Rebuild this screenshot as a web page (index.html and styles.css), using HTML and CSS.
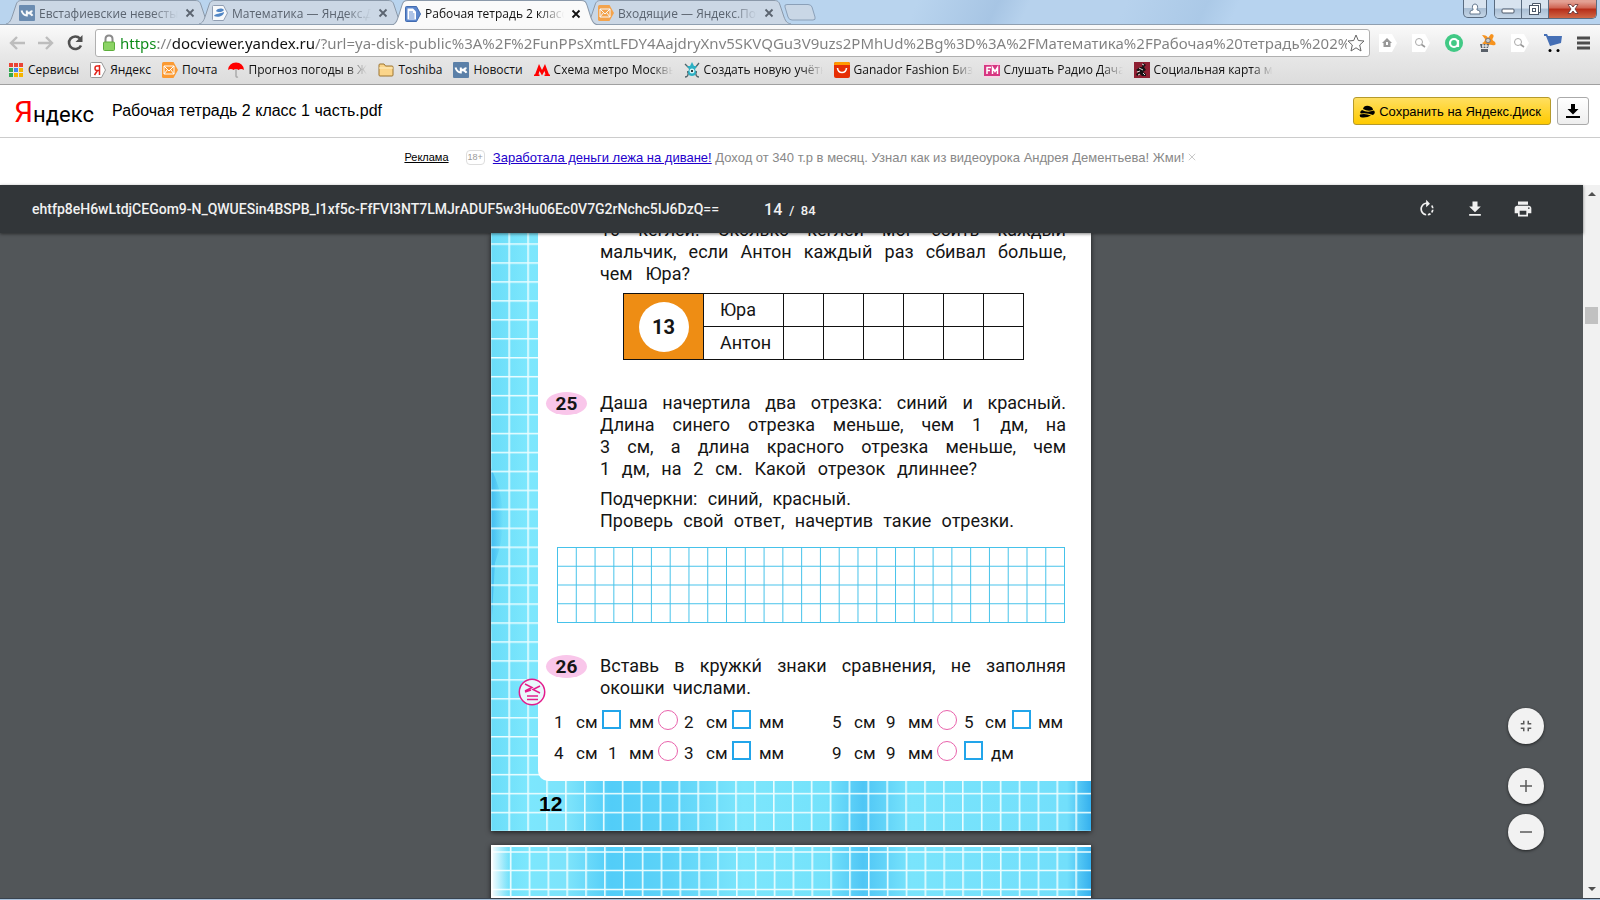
FILE: index.html
```html
<!DOCTYPE html>
<html lang="ru">
<head>
<meta charset="utf-8">
<title>Рабочая тетрадь 2 класс 1 часть.pdf</title>
<link rel="stylesheet" href="styles.css">
</head>
<body>
<svg class="defs" aria-hidden="true">
  <defs>
    <symbol id="tab" viewBox="0 0 206 24" preserveAspectRatio="none"><path d="M0 24C4 23 5 20 7 14L10 5C11 2 12 .500 16 .500H189C193 .500 194 2 195 5L199 17C201 22 202 23 206 24"/></symbol>
    <symbol id="close" viewBox="0 0 10 10"><path d="M1.500 1.500L8.500 8.500M8.500 1.500L1.500 8.500" fill="none" stroke="currentColor" stroke-width="1.800"/></symbol>
    <symbol id="vk" viewBox="0 0 16 16"><rect width="16" height="16" rx="1" fill="#5b80a8"/><path d="M2.500 5.500C3.500 8.500 5 10.500 7.800 10.500V5.500M13 5.500C12.500 7 10.500 8 8 8C10.500 8 12.500 9 13.500 10.800" fill="none" stroke="#fff" stroke-width="2"/></symbol>
    <symbol id="mail" viewBox="0 0 16 16"><path d="M1.500 0H11.500L16 8L11.500 16H1.500Q0 16 0 14.500V1.500Q0 0 1.500 0Z" fill="#fb9a32"/><path d="M2 4H12V12H2ZM2 4L7 9L12 4M2 12L5.500 7.500M12 12L8.500 7.500" fill="none" stroke="#fff"/></symbol>
    <symbol id="tag" viewBox="0 0 16 16"><path d="M1.500 .500H11.500L15.500 8L11.500 15.500H1.500Q.500 15.500 .500 14.500V1.500Q.500 .500 1.500 .500Z"/></symbol>
    <symbol id="searchtag" viewBox="0 0 18 18"><path d="M0 0H13L18 9L13 18H0Z" fill="#fff"/><circle cx="7" cy="8" r="3.500" fill="none" stroke="#aaa"/><path d="M9.500 10.500L13 13" stroke="#999" stroke-width="1.600"/></symbol>
    <symbol id="save" viewBox="0 0 24 24"><path d="M19 9h-4V3H9v6H5l7 7 7-7zM5 18v2h14v-2H5z"/></symbol>
  </defs>
</svg>

<header class="browser">
  <div class="tabstrip">
    <nav class="tabs" aria-label="Вкладки">
      <div class="tab"><svg class="tab-shape"><use href="#tab"/></svg><svg class="icon"><use href="#vk"/></svg><span class="tab-title">Евстафиевские невесты+</span><button class="tab-close" aria-label="Закрыть"><svg><use href="#close"/></svg></button></div>
      <div class="tab"><svg class="tab-shape"><use href="#tab"/></svg><svg class="icon" viewBox="0 0 16 16"><use href="#tag" fill="#fff" stroke="#8795aa"/><path d="M4 6C6 3 10 3 12 5C11 7 6 8 4 6ZM2 11C3 8 9 9 12 7C12 11 6 13 2 11Z" fill="#3c78c0"/></svg><span class="tab-title">Математика — Яндекс.Ди</span><button class="tab-close" aria-label="Закрыть"><svg><use href="#close"/></svg></button></div>
      <div class="tab active"><svg class="tab-shape"><use href="#tab"/></svg><svg class="icon" viewBox="0 0 16 16"><use href="#tag" fill="#5c87cd" stroke="#416bb0"/><path d="M2.500 2.500H8L11 5.500V13.500H2.500Z" fill="#fff"/><path d="M4 6H8M4 8H9.500M4 10H9.500M4 12H9.500" stroke="#5c87cd"/></svg><span class="tab-title">Рабочая тетрадь 2 класс</span><button class="tab-close" aria-label="Закрыть"><svg><use href="#close"/></svg></button></div>
      <div class="tab"><svg class="tab-shape"><use href="#tab"/></svg><svg class="icon"><use href="#mail"/></svg><span class="tab-title">Входящие — Яндекс.Поч</span><button class="tab-close" aria-label="Закрыть"><svg><use href="#close"/></svg></button></div>
      <button class="newtab" aria-label="Новая вкладка"><svg viewBox="0 0 32 17"><path d="M3 .500H24Q27 .500 28 3L31 13Q32 16 29 16H8Q5 16 4 13L1 3Q0 .500 3 .500Z" fill="#c9d7e6" stroke="#8ba0b8"/></svg></button>
    </nav>
    <div class="window-buttons">
      <button class="user" aria-label="Пользователь"><svg viewBox="0 0 12 12"><path d="M1 11V9Q1 7 4 7L4 6Q3 5 3.500 3Q4 1 6 1Q8 1 8.500 3Q9 5 8 6L8 7Q11 7 11 9V11Z" fill="#fff" stroke="#65788e"/></svg></button>
      <div class="window-group">
        <button class="min" aria-label="Свернуть"><svg viewBox="0 0 14 14"><rect x="1" y="7" width="12" height="4" rx="1" fill="#fff" stroke="#4b5768"/></svg></button>
        <button class="max" aria-label="Развернуть"><svg viewBox="0 0 14 14"><path d="M4.500 3V1.500H12.500V10.500H10.500" fill="#fff" stroke="#4b5768"/><rect x="1.500" y="3.500" width="9" height="9" fill="#fff" stroke="#4b5768"/><rect x="4.500" y="6.500" width="3" height="3" fill="none" stroke="#4b5768"/></svg></button>
        <button class="shut" aria-label="Закрыть окно"><svg viewBox="0 0 14 14"><path d="M2 2.500H5L7 5L9 2.500H12L9 7L12 11.500H9L7 9L5 11.500H2L5 7Z" fill="#fff" stroke="#5d3033" stroke-width=".800"/></svg></button>
      </div>
    </div>
  </div>

  <div class="toolbar">
    <div class="nav-row">
      <button class="nav" aria-label="Назад"><svg viewBox="0 0 18 18"><path d="M17 9H3M9 3L3 9L9 15" fill="none" stroke="#bdbdbd" stroke-width="2.400"/></svg></button>
      <button class="nav" aria-label="Вперёд"><svg viewBox="0 0 18 18"><path d="M1 9H15M9 3L15 9L9 15" fill="none" stroke="#bdbdbd" stroke-width="2.400"/></svg></button>
      <button class="nav" aria-label="Обновить"><svg viewBox="0 0 18 18"><path d="M14 4.500A6.300 6.300 0 1 0 15 11.500" fill="none" stroke="#505050" stroke-width="2.600"/><path d="M16.500 1V8H9.500Z" fill="#505050"/></svg></button>
      <div class="omnibox">
        <svg class="lock" viewBox="0 0 14 18"><path d="M3.500 9V5Q3.500 1.500 7 1.500Q10.500 1.500 10.500 5V9" fill="none" stroke="#8b8b8b" stroke-width="2"/><rect x="1.500" y="8" width="11" height="8.500" rx="1" fill="#8cd365" stroke="#5cae3b"/></svg>
        <input class="url" type="text" aria-label="Адрес" value="https://docviewer.yandex.ru/?url=ya-disk-public%3A%2F%2FunPPsXmtLFDY4AajdryXnv5SKVQGu3V9uzs2PMhUd%2Bg%3D%3A%2FМатематика%2FРабочая%20тетрадь%202%20класс">
        <button class="star" aria-label="В закладки"><svg viewBox="0 0 18 18"><path d="M9 1L11.300 6.500L17 7L12.700 11L14 17L9 13.800L4 17L5.300 11L1 7L6.700 6.500Z" fill="#fff" stroke="#666"/></svg></button>
      </div>
      <div class="extensions">
        <svg viewBox="0 0 18 18"><path d="M0 0H13L18 9L13 18H0Z" fill="#fff"/><path d="M3 9L8 4L13 9H11.500V13H4.500V9Z" fill="#999"/><rect x="7" y="8" width="2" height="3" fill="#fff"/></svg>
        <svg viewBox="0 0 18 18"><use href="#searchtag"/></svg>
        <svg viewBox="0 0 18 18"><circle cx="9" cy="9" r="9" fill="#41c985"/><circle cx="9" cy="9" r="4" fill="none" stroke="#fff" stroke-width="2.200"/><path d="M13 6V13" stroke="#fff" stroke-width="2.200"/></svg>
        <svg viewBox="0 0 18 18"><path d="M4 1Q9 1 10 4L13 0Q17 0 15 4Q13 6 17 8Q19 12 14 11Q11 10 8 12L4 9Q7 8 7 5Z" fill="#f7931e"/><circle cx="10" cy="6.500" r="2.300" fill="#ccc" stroke="#777"/><path d="M0 8L2 10H11L10 14H3L2 10M3 15H10V18H3Z" fill="#596069"/><path d="M4 12H10M5 10V14M8 10V14" stroke="#fff"/></svg>
        <svg viewBox="0 0 18 18"><use href="#searchtag"/></svg>
        <svg class="cart" viewBox="0 0 18 18"><path d="M0 0H3L4 2H18L17 9L6 12L2 2H0Z" fill="#456fb5"/><circle cx="6" cy="16.500" r="1.500"/><circle cx="14" cy="16.500" r="1.500"/></svg>
        <button class="menu" aria-label="Меню"><svg viewBox="0 0 13 14"><path d="M0 2H13M0 7H13M0 12H13" stroke="#4c4c4c" stroke-width="3"/></svg></button>
      </div>
    </div>
    <nav class="bookmarks" aria-label="Закладки">
      <a href="#"><svg class="icon" viewBox="0 0 16 16"><g fill="#ea4335"><path d="M1 1h4v4H1zM6 1h4v4H6zM11 1h4v4h-4z"/></g><path d="M1 6h4v4H1z" fill="#34a853"/><path d="M6 6h4v4H6z" fill="#4285f4"/><path d="M11 6h4v4h-4zM11 11h4v4h-4zM6 11h4v4H6z" fill="#f5b400"/><path d="M1 11h4v4H1z" fill="#34a853"/><path d="M5.500 0V16M10.500 0V16M0 5.500H16M0 10.500H16" stroke="#e6e6e6"/></svg><span>Сервисы</span></a>
      <a href="#"><svg class="icon" viewBox="0 0 16 16"><use href="#tag" fill="#fff" stroke="#999"/><path d="M9.500 3V13M9.500 4H7Q5 4 5 6.200T7 8.500H9.500M7.500 8.500L4.500 13" fill="none" stroke="#e2231a" stroke-width="1.500"/></svg><span>Яндекс</span></a>
      <a href="#"><svg class="icon"><use href="#mail"/></svg><span>Почта</span></a>
      <a class="long" href="#"><svg class="icon" viewBox="0 0 16 16"><path d="M0 8Q1 .500 8 .500T16 8Q13 6 10.500 8Q8 6 5.500 8Q3 6 0 8Z" fill="#f00"/><path d="M8 7V14Q8 15.500 10 15" fill="none" stroke="#aaa" stroke-width="1.500"/></svg><span>Прогноз погоды в Жу</span></a>
      <a href="#"><svg class="icon" viewBox="0 0 16 16"><path d="M1 3Q1 2 2 2H6L7.500 4H14Q15 4 15 5V13Q15 14 14 14H2Q1 14 1 13Z" fill="#fbd58a" stroke="#9c7431"/><path d="M1 6H15" stroke="#fff0c4"/></svg><span>Toshiba</span></a>
      <a href="#"><svg class="icon"><use href="#vk"/></svg><span>Новости</span></a>
      <a class="long" href="#"><svg class="icon" viewBox="0 0 16 16"><path d="M0 14V12.500H1L5 2L8 8L11 2L15 12.500H16V14H10.500V12.500H11.500L10.500 9L8 13.500L5.500 9L4.500 12.500H5.500V14Z" fill="#f00"/></svg><span>Схема метро Москвы</span></a>
      <a class="long" href="#"><svg class="icon" viewBox="0 0 16 16"><path d="M1 2L5 6M15 1L11 6M1 15Q5 15 4 9M15 15Q11 15 12 9M3 10H13" fill="none" stroke="#4e6268" stroke-width="1.300"/><path d="M8 0L10 4L13 4L11 7Q14 14 8 14T5 7L3 4H6Z" fill="#2bb0c4"/><circle cx="8" cy="9" r="2.500" fill="#d8f4f7"/><circle cx="8" cy="9" r="1"/></svg><span>Создать новую учётн</span></a>
      <a class="long" href="#"><svg class="icon" viewBox="0 0 16 16"><rect width="16" height="16" rx="2" fill="#e62e04"/><path d="M0 3V2Q0 0 2 0H14Q16 0 16 2V3Z" fill="#ff9a00"/><path d="M3.500 6Q4 10.500 8 10.500T12.500 6" fill="none" stroke="#fff" stroke-width="1.600"/></svg><span>Ganador Fashion Бизн</span></a>
      <a class="long" href="#"><svg class="icon" viewBox="0 0 16 16"><rect width="16" height="16" fill="#f4d6e5"/><rect y="3" width="16" height="11" fill="#d73581"/><path d="M3 12V5.500H7M3 8.500H6M8.500 12V5.500L11 9.500L13.500 5.500V12" fill="none" stroke="#fff" stroke-width="1.500"/></svg><span>Слушать Радио Дача</span></a>
      <a class="long" href="#"><svg class="icon" viewBox="0 0 16 16"><rect width="16" height="16" fill="#8e1f32"/><path d="M9 1L12 3L10 5L12 8L9 10L12 12V14H8L6 12L3 14L2 12L5 10L2 8L6 5L8 5Z" fill="#161214"/><path d="M8 2L10 3M5 6L9 8M3 10L6 9M9 11L11 13M4 13L6 12" stroke="#ddd"/></svg><span>Социальная карта мо</span></a>
    </nav>
  </div>
</header>

<section class="site-header">
  <a class="logo" href="#"><span>Я</span>ндекс</a>
  <h1>Рабочая тетрадь 2 класс 1 часть.pdf</h1>
  <button class="save"><svg viewBox="0 0 16 14"><path d="M4 5Q5 1 10 2Q14 3 14 6Q9 8 4 5ZM3 6Q8 9 15 6.500Q17 9 14 11Q8 8.500 2 9.500Q0 8 3 6ZM1 10.500Q6 9 12 11.500Q8 14 3 13.500Q0 13 1 10.500Z"/></svg>Сохранить на Яндекс.Диск</button>
  <button class="download" aria-label="Скачать"><svg viewBox="0 0 14 16"><path d="M5 1H9V6H12.500L7 11.500L1.500 6H5ZM0 13H14V15H0Z"/></svg></button>
</section>

<aside class="ad">
  <a class="ad-label" href="#">Реклама</a>
  <span class="age">18+</span>
  <p><a href="#">Заработала деньги лежа на диване!</a> Доход от 340 т.р в месяц. Узнал как из видеоурока Андрея Дементьева! Жми!</p>
  <button aria-label="Закрыть рекламу"><svg viewBox="0 0 10 10"><path d="M1 1L9 9M9 1L1 9" stroke="#bbb"/></svg></button>
</aside>

<main class="viewer">
  <div class="pdf">
    <div class="pdf-bar">
      <span class="pdf-title">ehtfp8eH6wLtdjCEGom9-N_QWUESin4BSPB_I1xf5c-FfFVI3NT7LMJrADUF5w3Hu06Ec0V7G2rNchc5IJ6DzQ==</span>
      <span class="pdf-page">14 <small>/&nbsp; 84</small></span>
      <div class="pdf-tools">
        <button aria-label="Повернуть"><svg viewBox="0 0 24 24"><path d="M15.550 5.550L11 1v3.070C7.060 4.560 4 7.920 4 12s3.050 7.440 7 7.930v-2.020c-2.840-.480-5-2.940-5-5.910s2.160-5.430 5-5.910V10l4.550-4.450zM19.930 11c-.170-1.390-.720-2.730-1.620-3.890l-1.420 1.420c.540.750.880 1.600 1.020 2.470h2.020zM13 17.900v2.020c1.390-.170 2.740-.710 3.900-1.610l-1.440-1.440c-.750.540-1.590.890-2.460 1.030zm3.890-2.420l1.420 1.410c.900-1.160 1.450-2.500 1.620-3.890h-2.020c-.140.870-.480 1.720-1.020 2.480z"/></svg></button>
        <button aria-label="Скачать"><svg viewBox="0 0 24 24"><use href="#save"/></svg></button>
        <button aria-label="Печать"><svg viewBox="0 0 24 24"><path d="M19 8H5c-1.660 0-3 1.340-3 3v6h4v4h12v-4h4v-6c0-1.660-1.340-3-3-3zm-3 11H8v-5h8v5zm3-7c-.550 0-1-.450-1-1s.450-1 1-1 1 .450 1 1-.450 1-1 1zm-1-9H6v4h12V3z"/></svg></button>
      </div>
    </div>

    <div class="pages">
      <article class="page">
        <svg class="paper" aria-hidden="true">
          <defs>
            <pattern id="cells" x="-1.500" y="10.300" width="18.900" height="18.950" patternUnits="userSpaceOnUse"><path d="M0 .800H18.900M.800 0V18.950" stroke="#eafdff" stroke-width="1.600"/></pattern>
            <linearGradient id="wash"><stop offset="0" stop-color="#6adcf8"/><stop offset=".060" stop-color="#7ce7fd"/><stop offset=".130" stop-color="#7ce3fb"/><stop offset=".200" stop-color="#52cdf8"/><stop offset=".300" stop-color="#5dd3f8"/><stop offset=".420" stop-color="#7ce6fc"/><stop offset=".560" stop-color="#74e2fb"/><stop offset=".620" stop-color="#4fc6f5"/><stop offset=".700" stop-color="#79e4fc"/><stop offset=".960" stop-color="#72dffb"/><stop offset="1" stop-color="#35b0ee"/></linearGradient>
            <linearGradient id="edge"><stop offset="0" stop-color="#2ba9ec" stop-opacity=".600"/><stop offset="1" stop-color="#2ba9ec" stop-opacity="0"/></linearGradient>
          </defs>
          <rect width="100%" height="100%" fill="url(#wash)"/>
          <path d="M0 235Q22 280 4 330L0 400Z" fill="url(#edge)"/>
          <rect width="100%" height="100%" fill="url(#cells)"/>
        </svg>
        <div class="sheet">
          <div class="body first">
            <span class="line">10 кеглей. Сколько кеглей мог сбить каждый</span>
            <span class="line">мальчик, если Антон каждый раз сбивал больше,</span>
            <span class="line w90">чем Юра?</span>
          </div>
          <table class="score">
            <tr><td class="sum" rowspan="2"><b>13</b></td><th scope="row">Юра</th><td></td><td></td><td></td><td></td><td></td><td></td></tr>
            <tr><th scope="row">Антон</th><td></td><td></td><td></td><td></td><td></td><td></td></tr>
          </table>
          <section class="task">
            <h2>25</h2>
            <div class="body">
              <span class="line">Даша начертила два отрезка: синий и красный.</span>
              <span class="line">Длина синего отрезка меньше, чем 1 дм, на</span>
              <span class="line">3 см, а длина красного отрезка меньше, чем</span>
              <span class="line w377">1 дм, на 2 см. Какой отрезок длиннее?</span>
              <span class="line w251 para">Подчеркни: синий, красный.</span>
              <span class="line w414">Проверь свой ответ, начертив такие отрезки.</span>
            </div>
          </section>
          <svg class="draw-grid" viewBox="0 0 508 76" preserveAspectRatio="none" aria-hidden="true">
            <defs><pattern id="thin" width="18.780" height="18.750" patternUnits="userSpaceOnUse"><path d="M0 .500H18.780M.500 0V18.750" stroke="#45c2ea"/></pattern></defs>
            <rect width="508" height="76" fill="url(#thin)"/><path d="M507.500 0V76" stroke="#45c2ea"/>
          </svg>
          <section class="task">
            <h2>26</h2>
            <div class="body">
              <span class="line">Вставь в кружки́ знаки сравнения, не заполняя</span>
              <span class="line w151">окошки числами.</span>
            </div>
          </section>
          <div class="equations">
            <span>1</span><span>см</span><i class="box"></i><span>мм</span><i class="ring"></i><span>2</span><span>см</span><i class="box"></i><span>мм</span><span>5</span><span>см</span><span>9</span><span>мм</span><i class="ring"></i><span>5</span><span>см</span><i class="box"></i><span>мм</span>
            <span>4</span><span>см</span><span class="mid">1</span><span>мм</span><i class="ring"></i><span>3</span><span>см</span><i class="box"></i><span>мм</span><span>9</span><span>см</span><span>9</span><span>мм</span><i class="ring"></i><i class="box"></i><span class="mid">дм</span>
          </div>
        </div>
        <svg class="compare" viewBox="0 0 28 28" aria-hidden="true"><circle cx="14" cy="14" r="12.700" fill="#e9f8fc" stroke="#e31c8c" stroke-width="1.500"/><path d="M7 6L14 9.500L7 13M22 8L15 11.500L22 15M9 18H20M9 21.500H20M7 14L13 12" fill="none" stroke="#e31c8c" stroke-width="1.500"/></svg>
        <div class="folio">12</div>
      </article>
      <article class="page next">
        <svg class="paper" aria-hidden="true">
          <defs>
            <pattern id="columns" width="18.850" height="80" patternUnits="userSpaceOnUse"><path d="M.800 0V80" stroke="#eafdff" stroke-width="1.600"/></pattern>
            <linearGradient id="fade"><stop offset="0" stop-color="#fff"/><stop offset="1" stop-color="#fff" stop-opacity="0"/></linearGradient>
          </defs>
          <rect y="2" width="100%" height="49" fill="url(#wash)"/>
          <path d="M0 7H600M0 25.500H600M0 44.500H600" stroke="#eafdff" stroke-width="1.600"/>
          <rect width="100%" height="60" fill="url(#columns)"/>
          <rect width="18" height="53" fill="url(#fade)"/>
        </svg>
      </article>
    </div>

    <div class="zoom">
      <button class="fit" aria-label="По размеру страницы"><svg viewBox="0 0 24 24"><path d="M5 16h3v3h2v-5H5v2zm3-8H5v2h5V5H8v3zm6 11h2v-3h3v-2h-5v5zm2-11V5h-2v5h5V8h-3z"/></svg></button>
      <button aria-label="Увеличить"><svg viewBox="0 0 24 24"><path d="M4 11H11V4H13V11H20V13H13V20H11V13H4Z"/></svg></button>
      <button aria-label="Уменьшить"><svg viewBox="0 0 24 24"><path d="M4 11H20V13H4Z"/></svg></button>
    </div>
  </div>
  <div class="scrollbar"><svg viewBox="0 0 8 4"><path d="M0 4L4 0L8 4Z"/></svg><div class="track"><div class="thumb"></div></div><svg viewBox="0 0 8 4"><path d="M0 0L4 4L8 0Z"/></svg></div>
</main>
<footer class="taskbar"></footer>
</body>
</html>
```
FILE: styles.css
```css
* { box-sizing: border-box; }
body {
  margin: 0;
  height: 100vh;
  display: flex;
  flex-direction: column;
  overflow: hidden;
  background: #fff;
  color: #000;
  font-family: "Liberation Sans", Arial, sans-serif;
}
button { padding: 0; border: 0; background: none; font: inherit; color: inherit; display: flex; align-items: center; justify-content: center; }
svg { display: block; flex: none; }
.defs { position: absolute; width: 0; height: 0; }
.icon { width: 16px; height: 16px; }

/* browser window */
.browser { flex: none; font-family: "Open Sans", "Noto Sans", sans-serif; font-size: 12px; }
.tabstrip {
  height: 25px;
  display: flex;
  justify-content: space-between;
  border-bottom: 1px solid #8f9fb0;
  background: linear-gradient(115deg, #b9d4ee 0 57%, #a7c5e4 62%, #b7d2ed 64% 70%, #abc9e7 75%, #b7d3ef 77%);
}
.tabs { display: flex; padding-left: 6px; align-items: flex-end; }
.tab { position: relative; width: 206px; height: 24px; margin-right: -13px; padding: 2px 11px 0 13px; display: flex; align-items: center; color: #5b6470; }
.tab.active { z-index: 1; height: 25px; margin-bottom: -1px; color: #111; }
.tab-shape { position: absolute; inset: 0; width: 100%; height: 100%; fill: #cbd7e5; stroke: #8b99aa; }
.active .tab-shape { fill: #fafafa; }
.tab .icon, .tab-title, .tab-close { position: relative; }
.tab:not(.active) .icon { opacity: .85; }
.tab-title { width: 142px; margin: 0 4px; overflow: hidden; white-space: nowrap; mask-image: linear-gradient(to right, #000 80%, transparent 98%); }
.tab-close { width: 10px; height: 10px; }
.tab-close svg { width: 10px; height: 10px; }
.newtab { width: 32px; height: 17px; margin: 0 0 3px 6px; }
.newtab svg { width: 32px; height: 17px; }
.window-buttons { display: flex; gap: 7px; padding-right: 3px; }
.window-buttons button { height: 18px; background: linear-gradient(#d8e3ef 45%, #a9bed4 50%, #c5d6e7); }
.window-buttons svg { width: 14px; height: 14px; }
.window-buttons .user { width: 24px; border: 1px solid #596b80; border-top: 0; border-radius: 0 0 5px 5px; }
.window-buttons .user svg { width: 12px; height: 12px; }
.window-group { display: flex; height: 19px; border: 1px solid #596b80; border-top: 0; border-radius: 0 0 5px 5px; overflow: hidden; }
.min, .max { width: 27px; border-right: 1px solid #596b80; }
.window-buttons .shut { width: 47px; background: linear-gradient(#e3a093 10%, #cf6250 45%, #b62c18 50%, #d06746); }

.toolbar { height: 60px; padding: 4px 10px 0 8px; border-bottom: 1px solid #a0a0a0; background: linear-gradient(#fafafa, #e8e8e8 50%, #dcdcdc); }
.nav-row { display: flex; align-items: center; }
.nav { width: 18px; margin-right: 11px; }
.nav svg { width: 18px; height: 18px; }
.omnibox { flex: 1; height: 28px; padding: 0 4px 0 6px; display: flex; align-items: center; border: 1px solid #b0b0b0; border-radius: 3px; background: #fff; }
.lock { width: 14px; height: 18px; }
.url {
  flex: 1;
  min-width: 0;
  height: 26px;
  margin-left: 4px;
  padding: 0;
  border: 0;
  outline: 0;
  font: 15px "Noto Sans", sans-serif;
  color: transparent;
  background: linear-gradient(to right, #0a8a16 0 38px, #808080 38px 52px, #111 52px 195px, #808080 195px);
  background-clip: text;
  -webkit-background-clip: text;
}
.star svg { width: 18px; height: 18px; }
.extensions { display: flex; align-items: center; gap: 15px; margin-left: 9px; }
.extensions > svg { width: 18px; height: 18px; }
.menu svg { width: 13px; height: 14px; }
.bookmarks { display: flex; gap: 11px; padding-top: 5px; }
.bookmarks a { display: flex; align-items: center; gap: 4px; color: #111; text-decoration: none; line-height: 16px; }
.bookmarks span { white-space: nowrap; }
.bookmarks .long span { width: 119px; overflow: hidden; mask-image: linear-gradient(to right, #000 82%, transparent); }

/* document header */
.site-header { flex: none; height: 53px; padding: 0 11px 0 14px; display: flex; align-items: center; border-bottom: 1px solid #ccc; }
.logo { width: 98px; font: 22px Roboto, sans-serif; color: #000; text-decoration: none; white-space: nowrap; }
.logo span { color: #f00; font-size: 30px; }
h1 { flex: 1; margin: 0; font-size: 16px; font-weight: 400; }
.save { height: 28px; padding: 0 9px 0 5px; gap: 4px; border: 1px solid #b59a2c; border-radius: 3px; background: linear-gradient(#ffdf60, #ffca00); font-size: 13px; }
.save svg { width: 16px; height: 14px; }
.download { width: 32px; height: 28px; margin-left: 6px; border: 1px solid #aaa; border-radius: 3px; background: linear-gradient(#fff, #eee); }
.download svg { width: 14px; height: 16px; }
.ad { flex: none; height: 47px; padding-bottom: 9px; display: flex; align-items: center; justify-content: center; font-size: 13px; color: #888; }
.ad p { margin: 0 3px 0 8px; }
.ad p a { color: #20c; }
.ad .ad-label { margin-right: 17px; color: #000; font-size: 11px; }
.age { padding: 0 1px; border: 1px solid #ddd; border-radius: 4px; font-size: 9px; line-height: 13px; color: #999; }
.ad button svg { width: 8px; height: 8px; }

/* pdf viewer */
.viewer { flex: 1; min-height: 0; display: flex; background: #525659; }
.pdf { position: relative; flex: 1; min-width: 0; display: flex; flex-direction: column; }
.pdf-bar { position: relative; z-index: 1; flex: none; height: 48px; padding: 0 50px 0 32px; display: flex; align-items: center; background: #323639; color: #f1f1f1; box-shadow: 0 1px 3px rgba(0, 0, 0, .5); font: 500 14px Roboto, sans-serif; }
.pdf-page { margin-left: 45px; font-size: 16px; }
.pdf-page small { margin-left: 3px; font-size: 13px; }
.pdf-tools { margin-left: auto; display: flex; gap: 28px; }
.pdf-tools svg { width: 20px; height: 20px; fill: #f1f1f1; }
.pages { flex: 1; min-height: 0; padding-right: 1px; overflow: hidden; display: flex; flex-direction: column; align-items: center; gap: 14px; }
.page { position: relative; flex: none; width: 600px; padding-left: 47px; background: #fff; box-shadow: 0 1px 5px rgba(0, 0, 0, .7); }
.paper { position: absolute; left: 0; top: 0; width: 100%; height: 100%; }
.sheet { position: relative; padding: 0 25px 12px 8px; border-bottom-left-radius: 10px; background: #fff; color: #151515; font: 18px/22px Roboto, sans-serif; }
.line { display: block; white-space: nowrap; text-align: justify; text-align-last: justify; }
.w90 { width: 90px; }
.w377 { width: 377px; }
.w251 { width: 251px; }
.w414 { width: 414px; }
.w151 { width: 151px; }
.para { margin-top: 8px; }
.first { margin-top: -14px; padding-left: 54px; }
.score { margin: 8px 0 32px 77px; border-collapse: collapse; table-layout: fixed; width: 401px; }
.score td, .score th { width: 40px; height: 33px; padding: 0; border: 1px solid #111; font-weight: 400; }
.score th { width: 80px; padding-left: 16px; text-align: left; }
.score .sum { width: 80px; background: #ee8d14; }
.sum b { display: block; width: 50px; margin: 0 auto; border-radius: 50%; background: #fff; font-weight: 700; font-size: 20px; line-height: 50px; text-align: center; }
.task { display: flex; gap: 13px; align-items: flex-start; }
.task .body { flex: 1; }
.task h2 { width: 41px; margin: 0; border-radius: 50%; background: #f9c6ea; font-weight: 700; font-size: 19px; line-height: 23px; text-align: center; }
.draw-grid { width: 508px; height: 76px; margin: 15px 0 32px 11px; }
.equations { margin: 8px 0 0 8px; display: grid; grid-template-columns: 22px 26px 27px 29px 26px 22px 26px 27px 73px 22px 32px 22px 29px 27px 21px 27px 26px 1fr; grid-auto-rows: 31px; font-size: 17px; line-height: 31px; }
.equations .mid { padding-left: 6px; }
.box, .ring { width: 19px; height: 19px; margin-top: 3px; border: 2px solid #22a5ea; }
.ring { width: 20px; height: 20px; border: 1px solid #e963ac; border-radius: 50%; }
.compare { position: absolute; left: 27px; bottom: 125px; width: 28px; height: 28px; }
.folio { position: relative; height: 50px; font: 700 21px/45px "Liberation Sans", sans-serif; padding-left: 1px; }
.next { height: 60px; }
.zoom { position: absolute; right: 39px; bottom: 48px; display: flex; flex-direction: column; gap: 10px; }
.zoom button { width: 36px; height: 36px; border-radius: 50%; background: #f2f2f2; box-shadow: 0 1px 3px rgba(0, 0, 0, .6); }
.zoom .fit { margin-bottom: 14px; }
.zoom svg { width: 18px; height: 18px; fill: #5a5a5a; }
.scrollbar { width: 17px; padding: 7px 2px; display: flex; flex-direction: column; align-items: center; background: #f1f1f1; }
.scrollbar svg { width: 8px; height: 4px; fill: #505050; }
.track { flex: 1; width: 100%; padding-top: 111px; }
.thumb { height: 17px; background: #c1c1c1; }
.taskbar { flex: none; height: 2px; border-top: 1px solid #39434e; background: #a9c2dc; }
```
